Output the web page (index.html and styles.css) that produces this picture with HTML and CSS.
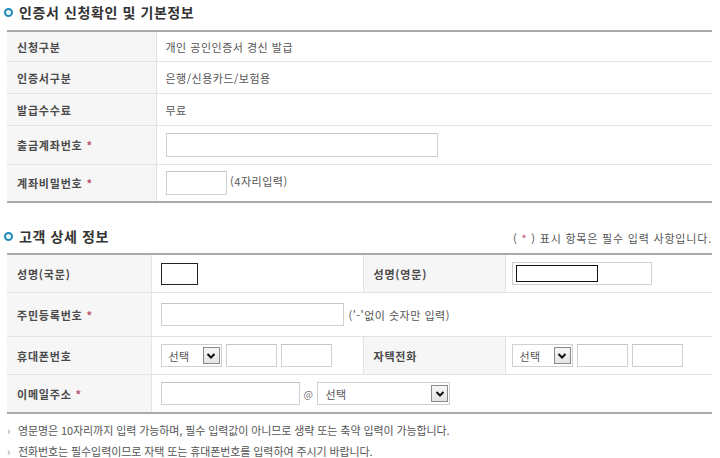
FILE: index.html
```html
<!DOCTYPE html>
<html lang="ko">
<head>
    <meta charset="UTF-8">
    <title>인증서 신청확인</title>
    <link rel="stylesheet" href="styles.css">
</head>
<body>
    <div class="wrap">
        <!-- 기본정보 -->
        <h2 class="sec-title"><span class="dot"></span>인증서 신청확인 및 기본정보</h2>
        <table class="form-table t1">
            <colgroup><col class="c-lbl"><col></colgroup>
            <tr class="r1"><th>신청구분</th><td>개인 공인인증서 경신 발급</td></tr>
            <tr class="r2"><th>인증서구분</th><td>은행/신용카드/보험용</td></tr>
            <tr class="r3"><th>발급수수료</th><td>무료</td></tr>
            <tr class="r4"><th>출금계좌번호 <span class="req">*</span></th><td><input type="text" class="ipt w272"></td></tr>
            <tr class="r5"><th>계좌비밀번호 <span class="req">*</span></th><td><input type="text" class="ipt w61"> <span class="hint">(4자리입력)</span></td></tr>
        </table>

        <!-- 고객 상세 정보 -->
        <div class="sec-head">
            <h2 class="sec-title"><span class="dot"></span>고객 상세 정보</h2>
            <p class="req-note">( <span class="req">*</span> ) 표시 항목은 필수 입력 사항입니다.</p>
        </div>
        <table class="form-table t2">
            <colgroup><col class="c-lbl1"><col class="c-val1"><col class="c-lbl2"><col></colgroup>
            <tr class="s1">
                <th>성명(국문)</th>
                <td><input type="text" class="ipt dark w37"></td>
                <th class="lbl2">성명(영문)</th>
                <td class="val2"><span class="ipt-box"><span class="inner"></span></span></td>
            </tr>
            <tr class="s2">
                <th>주민등록번호 <span class="req">*</span></th>
                <td colspan="3"><div class="line"><input type="text" class="ipt w183"><span class="hint">('-'없이 숫자만 입력)</span></div></td>
            </tr>
            <tr class="s3">
                <th>휴대폰번호</th>
                <td>
                    <div class="line">
                        <div class="sel w61"><span>선택</span><span class="sel-btn"><svg width="12" height="10" viewBox="0 0 12 10"><path d="M2.5 3 L6 6.5 L9.5 3" fill="none" stroke="#111" stroke-width="2"/></svg></span></div>
                        <input type="text" class="ipt w51">
                        <input type="text" class="ipt w51">
                    </div>
                </td>
                <th class="lbl2">자택전화</th>
                <td class="val2">
                    <div class="line">
                        <div class="sel w61"><span>선택</span><span class="sel-btn"><svg width="12" height="10" viewBox="0 0 12 10"><path d="M2.5 3 L6 6.5 L9.5 3" fill="none" stroke="#111" stroke-width="2"/></svg></span></div>
                        <input type="text" class="ipt w51">
                        <input type="text" class="ipt w51">
                    </div>
                </td>
            </tr>
            <tr class="s4">
                <th>이메일주소 <span class="req">*</span></th>
                <td colspan="3">
                    <div class="line">
                        <input type="text" class="ipt w139">
                        <span class="at">@</span>
                        <div class="sel w133"><span>선택</span><span class="sel-btn"><svg width="12" height="10" viewBox="0 0 12 10"><path d="M2.5 3 L6 6.5 L9.5 3" fill="none" stroke="#111" stroke-width="2"/></svg></span></div>
                    </div>
                </td>
            </tr>
        </table>

        <ul class="notes">
            <li>영문명은 10자리까지 입력 가능하며, 필수 입력값이 아니므로 생략 또는 축약 입력이 가능합니다.</li>
            <li>전화번호는 필수입력이므로 자택 또는 휴대폰번호를 입력하여 주시기 바랍니다.</li>
        </ul>
    </div>
</body>
</html>
```
FILE: styles.css
```css
/* 기본 */
body {
    margin: 0;
    background: #fff;
    color: #555;
    font-family: "Noto Sans CJK KR", "Noto Sans", sans-serif;
    font-size: 11px;
}

.wrap {
    padding: 0 8px 0 7px;
}

/* 섹션 제목 */
.sec-title {
    margin: 0 0 0 -3px;
    height: 30px;
    box-sizing: border-box;
    padding-top: 4px;
    display: flex;
    align-items: flex-start;
    gap: 6px;
    font-size: 14px;
    line-height: 16px;
    font-weight: bold;
    color: #333;
    letter-spacing: 0.6px;
}

.dot {
    width: 5px;
    height: 5px;
    margin-top: 4px;
    border: 2px solid #1f8db5;
    border-radius: 50%;
    background: #e8f6fb;
}

.sec-head {
    margin-top: 24px;
    height: 26px;
    display: flex;
    justify-content: space-between;
    align-items: flex-start;
    padding-top: 1px;
    box-sizing: border-box;
}

.sec-head .sec-title {
    height: auto;
    padding-top: 0;
}

.req-note {
    margin: 2px 0 0;
    line-height: 16px;
    color: #555;
    letter-spacing: 0.8px;
}

.req {
    color: #b8506f;
}

/* 폼 테이블 */
.form-table {
    width: 100%;
    border-collapse: collapse;
    table-layout: fixed;
    border-top: 2px solid #a9a9a9;
    border-bottom: 2px solid #a9a9a9;
}

.form-table th,
.form-table td {
    padding: 0 0 0 9px;
    border-bottom: 1px solid #e3e3e3;
    text-align: left;
    vertical-align: middle;
    line-height: 16px;
}

.form-table th {
    padding-left: 10px;
    background: #f6f6f6;
    border-right: 1px solid #e3e3e3;
    color: #4a4a4a;
    font-weight: bold;
    letter-spacing: 0.8px;
}

.form-table td {
    color: #555;
    letter-spacing: 0.5px;
}

.t1 .c-lbl { width: 149px; }
.t1 .r1 th, .t1 .r1 td { height: 29px; }
.t1 .r2 th, .t1 .r2 td { height: 31px; }
.t1 .r3 th, .t1 .r3 td { height: 31px; }
.t1 .r4 th, .t1 .r4 td { height: 38px; }
.t1 .r5 th, .t1 .r5 td { height: 36px; }

.t2 .c-lbl1 { width: 144px; }
.t2 .c-val1 { width: 212px; }
.t2 .c-lbl2 { width: 142px; }
.t2 .s1 th, .t2 .s1 td { height: 37px; }
.t2 .s2 th, .t2 .s2 td { height: 43px; }
.t2 .s3 th, .t2 .s3 td { height: 37px; }
.t2 .s4 th, .t2 .s4 td { height: 37px; }

.t2 th.lbl2 {
    border-left: 1px solid #e3e3e3;
    padding-left: 10px;
}

.t2 td.val2 {
    padding-left: 6px;
}

.line {
    display: flex;
    align-items: center;
    gap: 4px;
}

/* 입력 */
.ipt {
    box-sizing: border-box;
    height: 23px;
    margin: 0;
    padding: 0 3px;
    border: 1px solid #d0d0d0;
    border-top-color: #c4c4c4;
    background: #fff;
    vertical-align: middle;
    font: inherit;
}

.ipt.dark {
    height: 22px;
    border: 1px solid #222;
}

.w37 { width: 37px; }
.w51 { width: 51px; }
.w61 { width: 61px; }
.w133 { width: 133px; }
.w139 { width: 139px; }
.w183 { width: 183px; }
.w272 { width: 272px; height: 24px; }

.t1 .w61 { height: 24px; }

.hint {
    margin-left: 1px;
    color: #555;
}

.t1 .hint {
    margin-left: 0;
}

.ipt-box {
    display: block;
    box-sizing: border-box;
    width: 140px;
    height: 23px;
    padding: 2px 0 0 3px;
    border: 1px solid #d0d0d0;
}

.ipt-box .inner {
    display: block;
    width: 82px;
    height: 17px;
    box-sizing: border-box;
    border: 1px solid #111;
}

/* 선택 박스 */
.sel {
    box-sizing: border-box;
    height: 23px;
    padding: 0 1px 0 7px;
    display: flex;
    align-items: center;
    justify-content: space-between;
    border: 1px solid #d0d0d0;
    background: #fff;
    color: #555;
}

.sel-btn {
    box-sizing: border-box;
    width: 17px;
    height: 17px;
    display: flex;
    align-items: center;
    justify-content: center;
    border: 1px solid #8a8a8a;
    background: linear-gradient(#f7f7f7, #e4e4e4);
}

.at {
    color: #777;
    font-size: 10px;
}

/* 안내 */
.notes {
    margin: 6px 0 0;
    padding: 0;
    list-style: none;
}

.notes li {
    line-height: 21px;
    color: #555;
    letter-spacing: -0.1px;
}

.notes li::before {
    content: "›";
    display: inline-block;
    width: 11px;
    color: #888;
}
```
